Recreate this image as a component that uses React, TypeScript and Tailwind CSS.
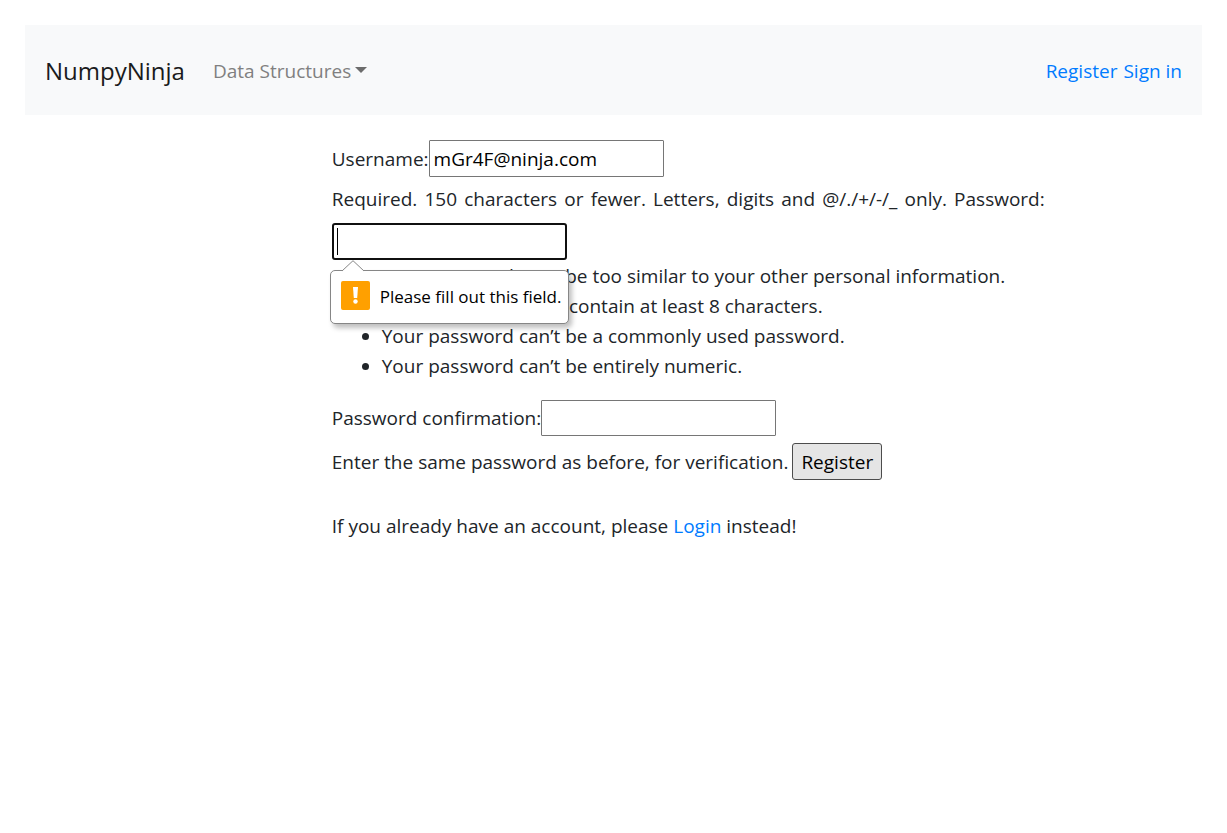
import React from "react";

const rules = [
  "Your password can’t be too similar to your other personal information.",
  "Your password must contain at least 8 characters.",
  "Your password can’t be a commonly used password.",
  "Your password can’t be entirely numeric.",
];

const field = "w-[235px] rounded-[1px] border border-[#767676] bg-white px-1 text-black outline-none";

function Navbar() {
  return (
    <nav className="flex h-[90px] items-center bg-[#f8f9fa] px-5 pt-[2px]">
      <a href="#" className="mr-7 text-2xl text-[#1a1b1c]">NumpyNinja</a>
      <button type="button" className="flex items-center gap-1 text-[#808080]">
        Data Structures
        <span className="mb-[2px] border-x-6 border-t-6 border-x-transparent border-t-[#6c6c6c]" />
      </button>
      <div className="ml-auto flex gap-[6px] text-[#007bff]">
        <a href="#">Register</a>
        <a href="#">Sign in</a>
      </div>
    </nav>
  );
}

function ValidationBubble() {
  return (
    <div role="alert" className="absolute top-[47px] left-[-2px] flex h-[54px] w-[239px] items-center rounded-[5px] border border-[#868686] bg-white px-[10px] shadow-[3px_4px_5px_rgba(0,0,0,0.25)]">
      <svg className="absolute top-[-11px] left-[11px]" width="22" height="12" viewBox="0 0 22 12">
        <path d="M0 12V11L11 .7 22 11V12Z" fill="#fff" />
        <path d="M0 11 11 .7 22 11" fill="none" stroke="#868686" />
      </svg>
      <svg className="mr-[10px] mb-1 shrink-0" width="29" height="29" viewBox="0 0 29 29">
        <rect width="29" height="29" rx="2" fill="#ffa000" />
        <path d="M12 6h5l-.8 11h-3.4Z" fill="#fff" />
        <circle cx="14.5" cy="20.5" r="2.2" fill="#fff" />
      </svg>
      <span className="text-[17px] whitespace-nowrap text-black">Please fill out this field.</span>
    </div>
  );
}

export default function App() {
  return (
    <div className="p-[25px] font-['Open_Sans','Noto_Sans',sans-serif] text-[19px] leading-[30px] text-[#212529]">
      <Navbar />
      <main className="mt-[25px] ml-[25vw] max-w-[713px]">
        <form onSubmit={(e) => e.preventDefault()}>
          <div className="flex items-center">
            <label htmlFor="username">Username:</label>
            <input id="username" defaultValue="mGr4F@ninja.com" className={`${field} h-[37px]`} />
          </div>
          <p className="mt-[7px] [text-align-last:justify]">
            Required. 150 characters or fewer. Letters, digits and @/./+/-/_ only. <label htmlFor="password">Password:</label>
          </p>
          <div className="relative mt-[9px] flex">
            <input id="password" type="password" className="h-[37px] w-[235px] rounded-[3px] border-2 border-[#101010] px-[3px] outline-none" />
            <span aria-hidden="true" className="absolute top-[5px] left-[5px] h-[27px] w-px bg-black" />
            <ValidationBubble />
          </div>
          <ul className="mt-[1px] mb-[19px] list-disc pl-[50px]">
            {rules.map((r) => <li key={r}>{r}</li>)}
          </ul>
          <div className="flex items-center">
            <label htmlFor="confirm">Password confirmation:</label>
            <input id="confirm" type="password" className={`${field} h-[36px]`} />
          </div>
          <div className="mt-[7px] flex items-center gap-1">
            <span>Enter the same password as before, for verification.</span>
            <button className="h-[37px] rounded-[3px] border border-[#4c4c4c] bg-[#e5e5e5] px-2 text-black">Register</button>
          </div>
        </form>
        <p className="mt-[31px]">If you already have an account, please <a href="#" className="text-[#007bff]">Login</a> instead!</p>
      </main>
    </div>
  );
}
